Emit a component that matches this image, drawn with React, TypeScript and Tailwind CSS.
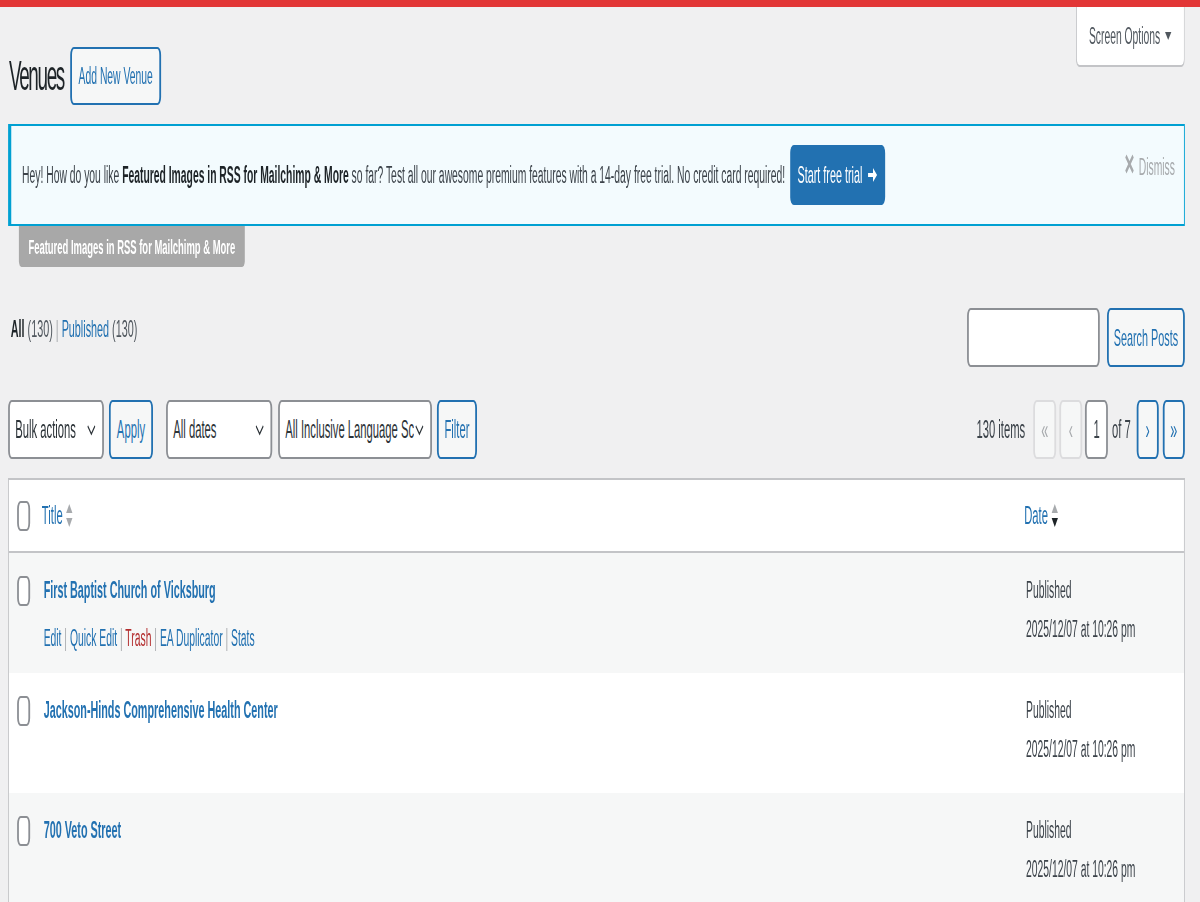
import React from 'react';

// page is laid out at 1/0.45 width and squeezed horizontally to match the reference
const blueBtn =
  'flex items-center justify-center rounded-[8px] border-y-2 border-x-[4px] border-[#2271b1] bg-[#f6f7f7] text-[#2271b1]';
const selectBox =
  'flex items-center rounded-[8px] border-y-2 border-x-[4px] border-[#8c8f94] bg-white text-[#2c3338] pl-[12px] pr-[14px]';
const greyBtn =
  'flex items-center justify-center rounded-[8px] border-y-2 border-x-[4px] border-[#dcdcde] bg-[#f6f7f7] text-[#a7aaad]';

function Chevron() {
  return (
    <svg width="20" height="12" viewBox="0 0 20 12" className="shrink-0">
      <polyline points="2,2 10,10 18,2" fill="none" stroke="#2c3338" strokeWidth="2" />
    </svg>
  );
}

function Check() {
  return <span className="block h-[30px] w-[29px] shrink-0 rounded-[8px] border-y-2 border-x-[4px] border-[#8c8f94] bg-white" />;
}

function SortArrows({ down }: { down?: boolean }) {
  return (
    <svg width="16" height="26" viewBox="0 0 16 26" className="ml-[7px]">
      <polygon points="8,1 15,10 1,10" fill="#a7aaad" />
      <polygon points="1,15 15,15 8,24" fill={down ? '#1d2327' : '#a7aaad'} />
    </svg>
  );
}

type Row = { title: string; actions?: boolean; striped: boolean };

const rows: Row[] = [
  { title: 'First Baptist Church of Vicksburg', actions: true, striped: true },
  { title: 'Jackson-Hinds Comprehensive Health Center', striped: false },
  { title: '700 Veto Street', striped: true },
];

export default function App() {
  return (
    <div className="h-[902px] w-[1200px] overflow-hidden bg-[#f0f0f1] font-['Liberation_Sans',Arial,sans-serif] text-[#3c434a]">
      <div className="h-[7px] bg-[#e23636]" />
      <div className="w-[2667px] origin-top-left scale-x-[0.45] pl-[18px] pr-[34px]">
        {/* heading + screen options */}
        <div className="flex items-start justify-between">
          <div className="mt-[40px] flex items-center pl-[2px]">
            <h1 className="text-[42px] leading-[58px] tracking-[-3px] text-[#1d2327]">Venues</h1>
            <button className={blueBtn + ' ml-[14px] h-[58px] w-[202px] text-[23px]'}>Add New Venue</button>
          </div>
          <div className="flex h-[60px] w-[242px] items-center justify-center gap-[10px] rounded-b-[8px] border-x-2 border-b-2 border-[#c3c4c7] bg-white text-[23px] text-[#50575e]">
            <span>Screen Options</span>
            <svg width="16" height="10" viewBox="0 0 16 10">
              <polygon points="1,1 15,1 8,9" fill="#50575e" />
            </svg>
          </div>
        </div>

        {/* promo notice */}
        <div className="mt-[19px] flex h-[102px] border-y-2 border-l-[7px] border-r-2 border-[#00a0d2] bg-[#f3fbfe] pl-[24px] pr-[20px]">
          <div className="flex items-center text-[23px]">
            <span className="whitespace-nowrap">
              Hey! How do you like <b className="font-bold text-[#1d2327]">Featured Images in RSS for Mailchimp &amp; More</b> so far? Test all our awesome premium features with a 14-day free trial. No credit card required!
            </span>
            <button className="ml-[11px] flex h-[60px] w-[211px] items-center justify-center gap-[12px] rounded-[8px] bg-[#2271b1] text-[24px] text-white">
              Start free trial
              <svg width="22" height="14" viewBox="0 0 22 14">
                <path d="M1 5h11V0l9 7-9 7V9H1z" fill="#fff" />
              </svg>
            </button>
          </div>
          <div className="ml-auto mt-[24px] flex items-start gap-[10px] text-[23px] text-[#a7aaad]">
            <svg width="22" height="20" viewBox="0 0 22 20" className="mt-[4px]">
              <path d="M3 2l16 16M19 2L3 18" stroke="#a7aaad" strokeWidth="4" />
            </svg>
            <span>Dismiss</span>
          </div>
        </div>
        <div className="ml-[24px] flex h-[41px] w-[502px] items-center justify-center rounded-b-[6px] bg-[#a8a8a8] text-[21px] font-bold text-white">
          Featured Images in RSS for Mailchimp &amp; More
        </div>

        {/* views + search */}
        <div className="mt-[41px] flex items-start justify-between">
          <div className="pl-[6px] pt-[6px] text-[24px] leading-[30px]">
            <span className="font-bold text-[#1d2327]">All</span> <span className="text-[#50575e]">(130)</span>{' '}
            <span className="text-[#a7aaad]">|</span> <span className="text-[#2271b1]">Published</span>{' '}
            <span className="text-[#50575e]">(130)</span>
          </div>
          <div className="flex gap-[16px]">
            <div className="h-[59px] w-[295px] rounded-[8px] border-y-2 border-x-[4px] border-[#8c8f94] bg-white" />
            <button className={blueBtn + ' h-[59px] w-[173px] text-[24px]'}>Search Posts</button>
          </div>
        </div>

        {/* tablenav */}
        <div className="mt-[33px] flex h-[59px] items-center justify-between text-[25px]">
          <div className="flex h-full items-stretch">
            <div className={selectBox + ' w-[213px] justify-between'}>
              <span>Bulk actions</span>
              <Chevron />
            </div>
            <button className={blueBtn + ' ml-[11px] w-[98px]'}>Apply</button>
            <div className={selectBox + ' ml-[29px] w-[236px] justify-between'}>
              <span>All dates</span>
              <Chevron />
            </div>
            <div className={selectBox + ' ml-[13px] w-[342px] gap-[2px] pr-[10px]'}>
              <span className="flex-1 overflow-hidden whitespace-nowrap">All Inclusive Language Sc</span>
              <Chevron />
            </div>
            <button className={blueBtn + ' ml-[11px] w-[89px]'}>Filter</button>
          </div>
          <div className="flex h-full items-stretch text-[#3c434a]">
            <span className="mr-[18px] self-center">130 items</span>
            <span className={greyBtn + ' w-[51px] text-[28px]'}>«</span>
            <span className={greyBtn + ' ml-[7px] w-[51px] text-[28px]'}>‹</span>
            <span className="ml-[6px] flex w-[51px] items-center justify-center rounded-[8px] border-y-2 border-x-[4px] border-[#8c8f94] bg-white">
              1
            </span>
            <span className="ml-[9px] mr-[13px] self-center">of 7</span>
            <span className={blueBtn + ' w-[49px] text-[28px]'}>›</span>
            <span className={blueBtn + ' ml-[9px] w-[49px] text-[28px]'}>»</span>
          </div>
        </div>

        {/* list table */}
        <div className="mt-[19px] border-x-2 border-t-2 border-[#c3c4c7] bg-white text-[23px]">
          <div className="flex h-[73px] items-center border-b-2 border-[#c3c4c7] pl-[18px] text-[25px]">
            <Check />
            <div className="ml-[26px] flex flex-1 items-center text-[#2271b1]">
              Title
              <SortArrows />
            </div>
            <div className="flex w-[355px] items-center text-[#2271b1]">
              Date
              <SortArrows down />
            </div>
          </div>
          {rows.map(r => (
            <div
              key={r.title}
              className={'flex h-[120px] items-start pl-[18px] pt-[22px] ' + (r.striped ? 'bg-[#f6f7f7]' : 'bg-white')}
            >
              <div className="mt-[1px]">
                <Check />
              </div>
              <div className="ml-[30px] flex-1">
                <div className="text-[24px] font-bold leading-[30px] text-[#2271b1]">{r.title}</div>
                {r.actions && (
                  <div className="mt-[18px] text-[23px] leading-[30px] text-[#2271b1]">
                    Edit <span className="text-[#a7aaad]">|</span> Quick Edit <span className="text-[#a7aaad]">|</span>{' '}
                    <span className="text-[#b32d2e]">Trash</span> <span className="text-[#a7aaad]">|</span> EA Duplicator{' '}
                    <span className="text-[#a7aaad]">|</span> Stats
                  </div>
                )}
              </div>
              <div className="w-[351px] text-[#3c434a]">
                <div className="leading-[30px]">Published</div>
                <div className="mt-[9px] leading-[30px]">2025/12/07 at 10:26 pm</div>
              </div>
            </div>
          ))}
        </div>
      </div>
    </div>
  );
}
